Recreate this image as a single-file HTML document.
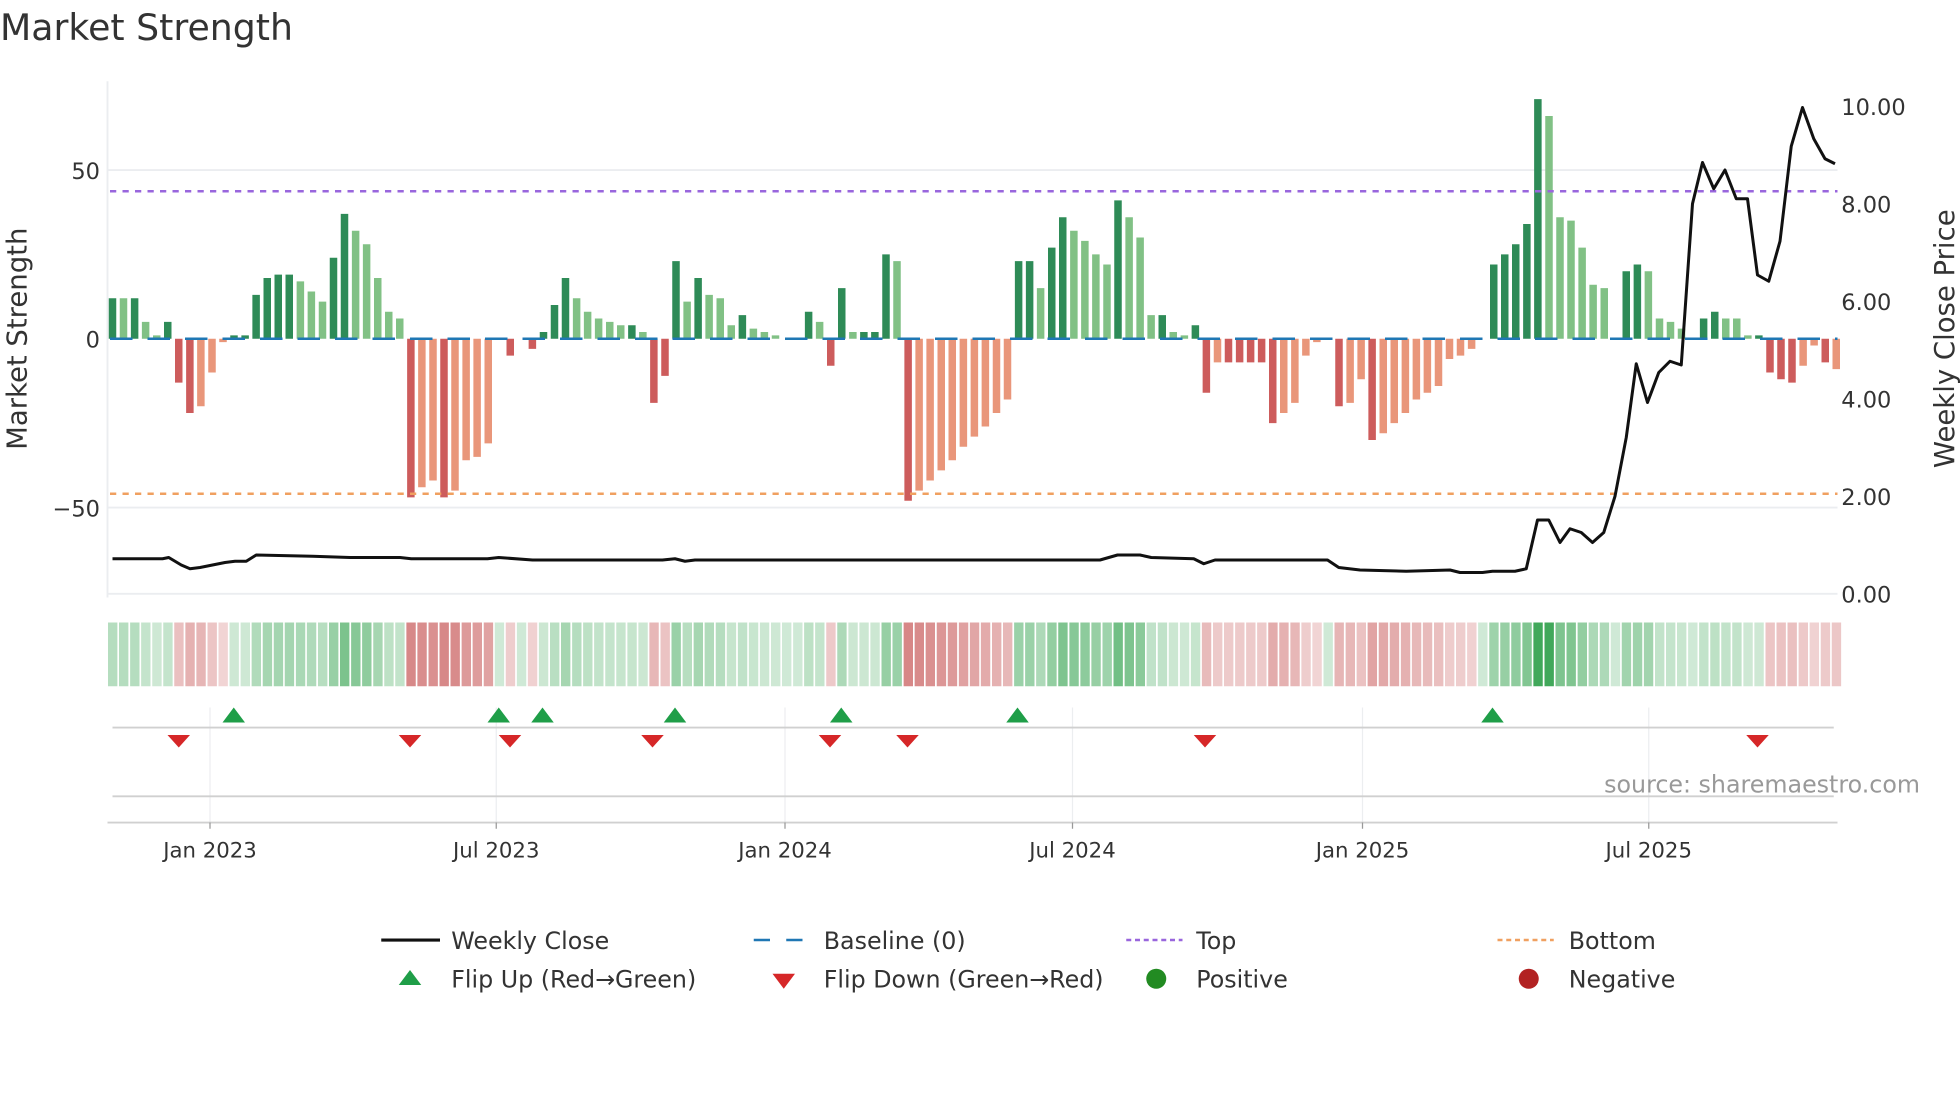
<!DOCTYPE html>
<html><head><meta charset="utf-8"><style>
html,body{margin:0;padding:0;background:#fff;}
svg{display:block;font-family:"DejaVu Sans","Liberation Sans",sans-serif;}
</style></head><body>
<svg id="s" width="1960" height="1102" viewBox="0 0 1568 881.6" xmlns="http://www.w3.org/2000/svg">
<rect width="1568" height="882" fill="#fff"/>
<text x="0" y="32" font-size="29" fill="#333">Market Strength</text>
<g stroke="#ebedf0" stroke-width="1.5">
<line x1="86" y1="136" x2="1470" y2="136"/>
<line x1="86" y1="406" x2="1470" y2="406"/>
<line x1="86" y1="475" x2="1470" y2="475"/>
<line x1="86" y1="65" x2="86" y2="478"/>
</g>
<g id="bars"></g>
<line x1="88" y1="271" x2="1470" y2="271" stroke="#1f77b4" stroke-width="2" stroke-dasharray="18 12"/>
<line x1="88" y1="153" x2="1470" y2="153" stroke="#9966dd" stroke-width="2" stroke-dasharray="5 5"/>
<line x1="88" y1="395" x2="1470" y2="395" stroke="#f0a060" stroke-width="2" stroke-dasharray="5 5"/>
<polyline id="price" fill="none" stroke="#111" stroke-width="2.4" stroke-linejoin="round"/>
<g font-size="18" fill="#333">
<text x="80" y="143" text-anchor="end">50</text>
<text x="80" y="278" text-anchor="end">0</text>
<text x="80" y="413" text-anchor="end">−50</text>
<text x="1473" y="92">10.00</text>
<text x="1473" y="170">8.00</text>
<text x="1473" y="248">6.00</text>
<text x="1473" y="326">4.00</text>
<text x="1473" y="404">2.00</text>
<text x="1473" y="482">0.00</text>
</g>
<text transform="translate(21,271) rotate(-90)" font-size="22" fill="#333" text-anchor="middle">Market Strength</text>
<text transform="translate(1563,271) rotate(-90)" font-size="22" fill="#333" text-anchor="middle">Weekly Close Price</text>
<g id="heat"></g>
<g stroke="#eceef0" stroke-width="1">
<line x1="168" y1="566" x2="168" y2="658"/><line x1="397" y1="566" x2="397" y2="658"/>
<line x1="628" y1="566" x2="628" y2="658"/><line x1="858" y1="566" x2="858" y2="658"/>
<line x1="1090" y1="566" x2="1090" y2="658"/><line x1="1319" y1="566" x2="1319" y2="658"/>
</g>
<line x1="90" y1="582" x2="1467" y2="582" stroke="#d0d0d0" stroke-width="1.5"/>
<line x1="90" y1="637" x2="1467" y2="637" stroke="#d0d0d0" stroke-width="1.5"/>
<line x1="86" y1="658" x2="1470" y2="658" stroke="#d0d0d0" stroke-width="1.5"/>
<g id="flips"></g>
<text x="1536" y="634" font-size="19" fill="#999" text-anchor="end">source: sharemaestro.com</text>
<g stroke="#999" stroke-width="1">
<line x1="168" y1="658" x2="168" y2="663"/><line x1="397" y1="658" x2="397" y2="663"/>
<line x1="628" y1="658" x2="628" y2="663"/><line x1="858" y1="658" x2="858" y2="663"/>
<line x1="1090" y1="658" x2="1090" y2="663"/><line x1="1319" y1="658" x2="1319" y2="663"/>
</g>
<g font-size="17" fill="#333" text-anchor="middle">
<text x="168" y="686">Jan 2023</text><text x="397" y="686">Jul 2023</text>
<text x="628" y="686">Jan 2024</text><text x="858" y="686">Jul 2024</text>
<text x="1090" y="686">Jan 2025</text><text x="1319" y="686">Jul 2025</text>
</g>
<g font-size="19" fill="#333">
<line x1="305" y1="752" x2="352" y2="752" stroke="#111" stroke-width="2.5"/>
<text x="361" y="759">Weekly Close</text>
<line x1="603" y1="752" x2="648" y2="752" stroke="#1f77b4" stroke-width="2" stroke-dasharray="13 13"/>
<text x="659" y="759">Baseline (0)</text>
<line x1="901" y1="752" x2="946" y2="752" stroke="#9966dd" stroke-width="2" stroke-dasharray="4 3"/>
<text x="957" y="759">Top</text>
<line x1="1198" y1="752" x2="1243" y2="752" stroke="#f0a060" stroke-width="2" stroke-dasharray="4 3"/>
<text x="1255" y="759">Bottom</text>
<polygon points="319,788 337,788 328,776" fill="#1f9e48"/>
<text x="361" y="790">Flip Up (Red→Green)</text>
<polygon points="618,779 636,779 627,791" fill="#d62728"/>
<text x="659" y="790">Flip Down (Green→Red)</text>
<circle cx="925" cy="783" r="8" fill="#228b22"/>
<text x="957" y="790">Positive</text>
<circle cx="1223" cy="783" r="8" fill="#b22222"/>
<text x="1255" y="790">Negative</text>
</g>
</svg>
<script>
var V=[[12,1],[12,0],[12,1],[5,0],[1,0],[5,1],[-13,1],[-22,1],[-20,0],[-10,0],[-1,0],[1,1],[1,1],[13,1],[18,1],[19,1],[19,1],[17,0],[14,0],[11,0],[24,1],[37,1],[32,0],[28,0],[18,0],[8,0],[6,0],[-47,1],[-44,0],[-42,0],[-47,1],[-45,0],[-36,0],[-35,0],[-31,0],[0,0],[-5,1],[0,0],[-3,1],[2,1],[10,1],[18,1],[12,0],[8,0],[6,0],[5,0],[4,0],[4,1],[2,0],[-19,1],[-11,1],[23,1],[11,0],[18,1],[13,0],[12,0],[4,0],[7,1],[3,0],[2,0],[1,0],[0,0],[0,0],[8,1],[5,0],[-8,1],[15,1],[2,0],[2,1],[2,1],[25,1],[23,0],[-48,1],[-45,0],[-42,0],[-39,0],[-36,0],[-32,0],[-29,0],[-26,0],[-22,0],[-18,0],[23,1],[23,1],[15,0],[27,1],[36,1],[32,0],[29,0],[25,0],[22,0],[41,1],[36,0],[30,0],[7,0],[7,1],[2,0],[1,0],[4,1],[-16,1],[-7,0],[-7,1],[-7,1],[-7,1],[-7,1],[-25,1],[-22,0],[-19,0],[-5,0],[-1,0],[0,0],[-20,1],[-19,0],[-12,0],[-30,1],[-28,0],[-25,0],[-22,0],[-18,0],[-16,0],[-14,0],[-6,0],[-5,0],[-3,0],[0,0],[22,1],[25,1],[28,1],[34,1],[71,1],[66,0],[36,0],[35,0],[27,0],[16,0],[15,0],[0,0],[20,1],[22,1],[20,0],[6,0],[5,0],[3,0],[0,0],[6,1],[8,1],[6,0],[6,0],[1,0],[1,1],[-10,1],[-12,1],[-13,1],[-8,0],[-2,0],[-7,1],[-9,0]];
var NS="http://www.w3.org/2000/svg";
function el(t,a,p){var e=document.createElementNS(NS,t);for(var k in a)e.setAttribute(k,a[k]);document.getElementById(p).appendChild(e);}
var step=(1469-90)/(V.length-1);
V.forEach(function(v,i){
 var x=90+i*step,val=v[0],h=Math.abs(val)*2.7;
 var c=val>=0?(v[1]?"#2e8b57":"#81c185"):(v[1]?"#cd5c5c":"#e9967a");
 if(val!==0) el("rect",{x:(x-3).toFixed(1),y:(val>0?271-h:271).toFixed(1),width:6,height:Math.max(h,1).toFixed(1),fill:c},"bars");
 var m=Math.min(Math.abs(val)/50,1),col;
 if(val>=0){var a=0.25+0.6*m;col="rgba(65,168,90,"+a.toFixed(2)+")";if(val>60)col="#41a85a";}
 else{var a=0.25+0.5*m;col="rgba(200,90,90,"+a.toFixed(2)+")";}
 el("rect",{x:(x-3.6).toFixed(1),y:498,width:(step-1.3).toFixed(1),height:51,fill:col},"heat");
});
var P=[[90,447],[130,447],[135,446],[145,452],[152,455],[160,454],[180,450],[188,449],[197,449],[205,444],[250,445],[280,446],[320,446],[329,447],[390,447],[399,446],[426,448],[470,448],[530,448],[540,447],[548,449],[556,448],[880,448],[894,444],[912,444],[921,446],[955,447],[963,451],[972,448],[1062,448],[1071,454],[1088,456],[1125,457],[1160,456],[1168,458],[1186,458],[1194,457],[1212,457],[1221,455],[1230,416],[1239,416],[1248,434],[1256,423],[1265,426],[1274,434],[1283,426],[1292,397],[1301,350],[1309,291],[1318,322],[1327,298],[1336,289],[1345,292],[1354,163],[1362,130],[1371,151],[1380,136],[1389,159],[1398,159],[1406,220],[1415,225],[1424,193],[1433,117],[1442,86],[1451,111],[1460,127],[1468,131]];
document.getElementById("price").setAttribute("points",P.map(function(p){return p.join(",")}).join(" "));
[187,399,434,540,673,814,1194].forEach(function(x){el("polygon",{points:(x-9)+",578 "+(x+9)+",578 "+x+",566",fill:"#1f9e48"},"flips");});
[143,328,408,522,664,726,964,1406].forEach(function(x){el("polygon",{points:(x-9)+",588 "+(x+9)+",588 "+x+",598",fill:"#d62728"},"flips");});
</script>
</body></html>
